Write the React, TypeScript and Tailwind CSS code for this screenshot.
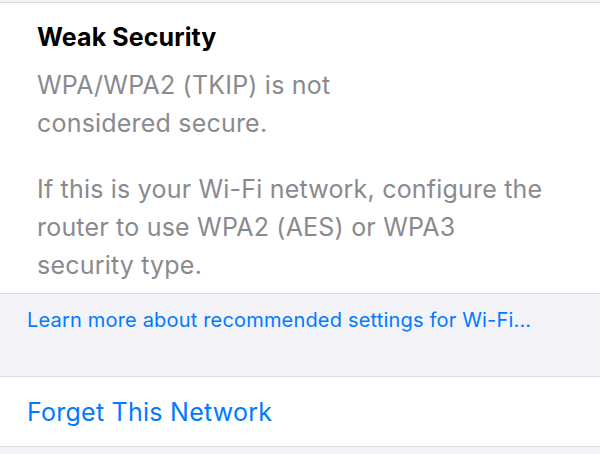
import React from 'react';

export default function App() {
    return (
        <div className="w-[600px] h-[454px] overflow-hidden bg-[#f2f2f7] font-['Inter','Noto_Sans',sans-serif] antialiased">
            <div className="h-[3px] bg-[#f2f2f7] border-b border-[#dcdce0]" />
            <section className="bg-white pl-[37px] pr-4 pt-[19px] pb-[9px] border-b border-[#dcdce0]">
                <h2 className="text-[25px] leading-[31px] font-bold text-black tracking-[0.1px]">Weak Security</h2>
                <p className="mt-[13px] text-[25px] leading-[38px] text-[#8a8a8e] tracking-[0.2px]">
                    WPA/WPA2 (TKIP) is not
                    <br />
                    considered secure.
                </p>
                <p className="mt-[28px] text-[25px] leading-[38px] text-[#8a8a8e] tracking-[0.2px]">
                    If this is your Wi-Fi network, configure the
                    <br />
                    router to use WPA2 (AES) or WPA3
                    <br />
                    security type.
                </p>
            </section>
            <section className="h-[83px] pl-[27px] pt-[14px] border-b border-[#dcdce0]">
                <a className="text-[20px] leading-[24px] text-[#007aff] tracking-[0.18px]">
                    Learn more about recommended settings for Wi-Fi...
                </a>
            </section>
            <section className="bg-white h-[70px] pl-[27px] flex items-center border-b border-[#dcdce0]">
                <span className="text-[25px] leading-[30px] text-[#007aff] tracking-[0.25px]">Forget This Network</span>
            </section>
        </div>
    );
}
